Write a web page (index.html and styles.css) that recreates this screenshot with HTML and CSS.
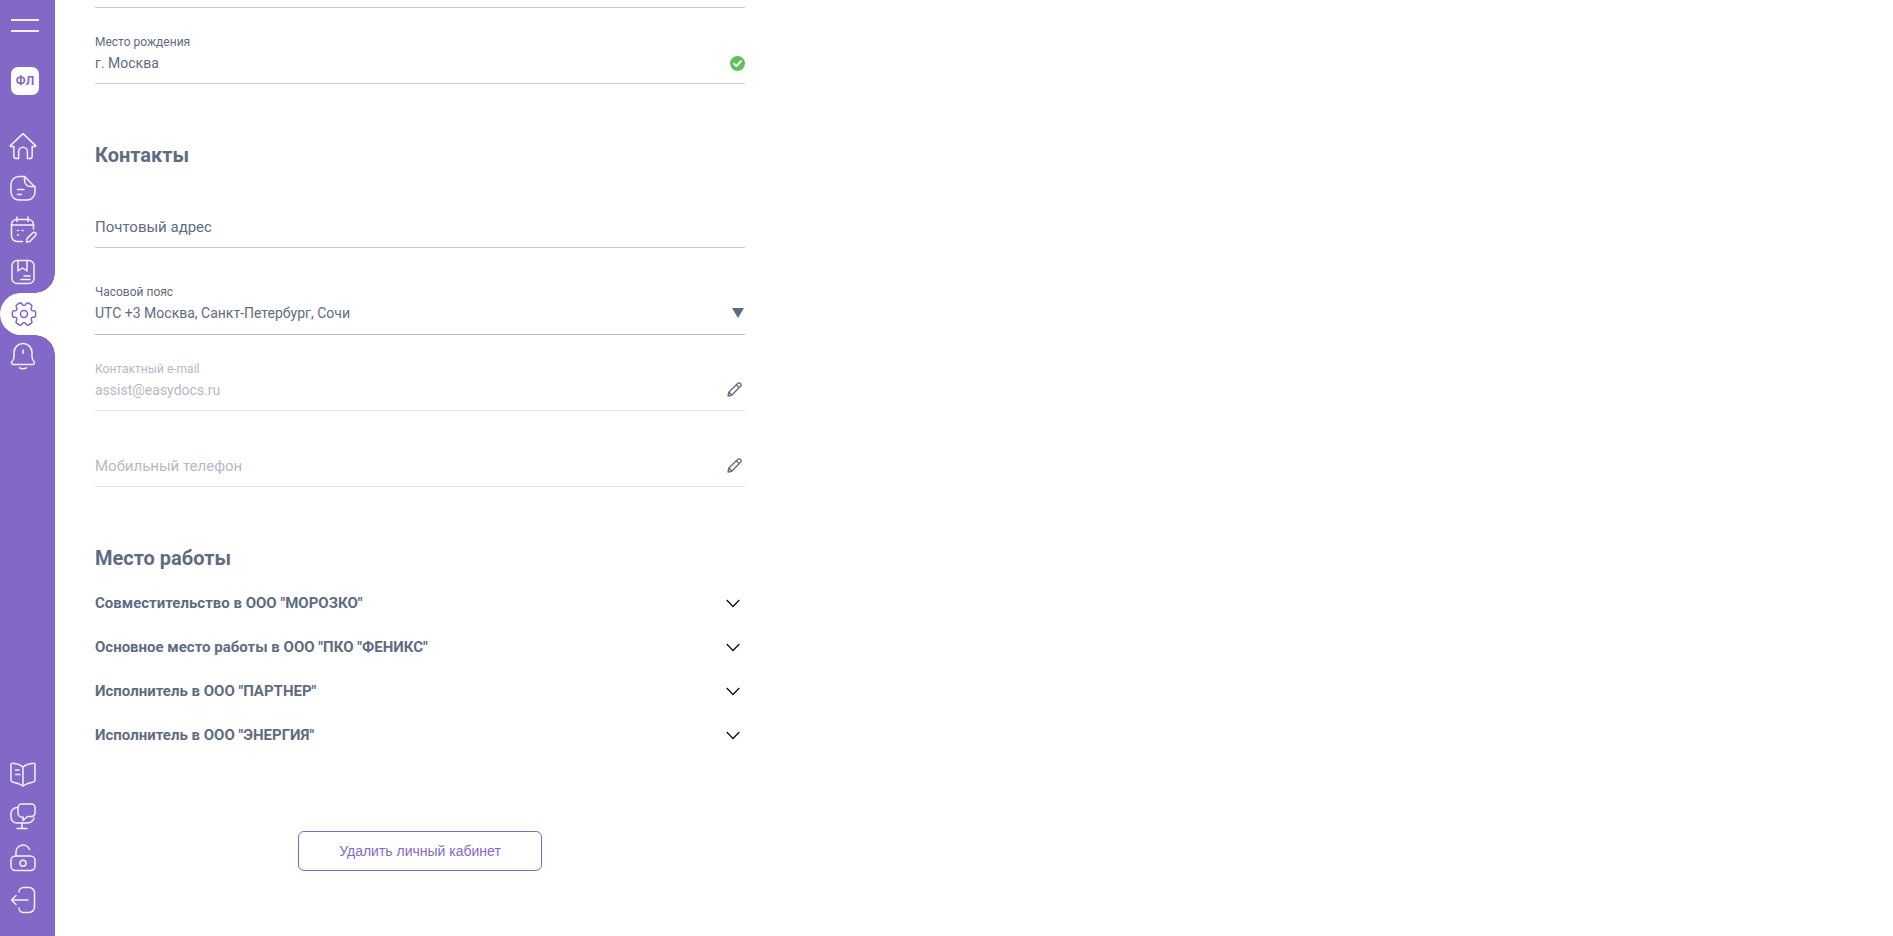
FILE: index.html
```html
<!DOCTYPE html>
<html lang="ru">
<head>
<meta charset="utf-8">
<title>Настройки</title>
<link rel="stylesheet" href="styles.css">
</head>
<body>
<div class="app">
  <aside class="sidebar">
    <div class="nav-top">
      <div class="burger"><span></span><span></span></div>
      <div class="avatar">ФЛ</div>
      <nav class="nav">
        <a class="nav-item"><svg class="ico" viewBox="0 0 28 28"><path d="M14 1.600 26.600 13.600a.6.6 0 0 1-.4 1H23.200V24a2.600 2.600 0 0 1-2.600 2.600H18.400V19.600a4.400 4.400 0 0 0-8.800 0V26.600H7.400A2.600 2.600 0 0 1 4.800 24V14.600H1.800a.6.6 0 0 1-.4-1Z"/></svg></a>
        <a class="nav-item"><svg class="ico" viewBox="0 0 28 28"><path d="M10 2.500H15.500L26 13V18a8 8 0 0 1-8 8H10a8 8 0 0 1-8-8V10.500a8 8 0 0 1 8-8Z"/><path d="M15.500 2.500V6.500a6 6 0 0 0 6 6H26M8.500 15.500H15M8.500 20.500H12.500"/></svg></a>
        <a class="nav-item"><svg class="ico" viewBox="0 0 28 28"><path d="M13.500 25.500H8a5.500 5.500 0 0 1-5.500-5.500V8.500A5 5 0 0 1 7.500 3.500H19.500a5 5 0 0 1 5 5V13"/><path d="M2.500 9H24.500M8 1V5.500M19 1V5.500M8.500 14.500H9.500M13 14.500H14M8.500 19H9.500"/><path d="M17.500 26 18 22.600 23.800 16.800a1.700 1.700 0 0 1 2.700 2.600L20.800 25.400Z"/></svg></a>
        <a class="nav-item"><svg class="ico" viewBox="0 0 28 28"><rect x="3" y="2.500" width="22" height="23" rx="5"/><path d="M9 2.500V13L13.500 10 18 13V2.500M15 18H21M12 21.500H21"/></svg></a>
        <a class="nav-item is-active"><svg class="ico ico-24" viewBox="0 0 24 24"><circle cx="12" cy="12" r="3"/><path d="M2 12.880v-1.760c0-1.040.850-1.900 1.900-1.900 1.810 0 2.550-1.280 1.640-2.850-.520-.900-.210-2.070.700-2.590l1.730-.990c.790-.470 1.810-.190 2.280.600l.110.190c.900 1.570 2.380 1.570 3.290 0l.110-.190c.470-.790 1.490-1.070 2.280-.600l1.730.990c.910.520 1.220 1.690.700 2.590-.910 1.570-.170 2.850 1.640 2.850 1.040 0 1.900.850 1.900 1.900v1.760c0 1.040-.850 1.900-1.900 1.900-1.810 0-2.550 1.280-1.640 2.850.520.910.210 2.070-.700 2.590l-1.730.990c-.790.470-1.810.190-2.280-.600l-.110-.190c-.900-1.570-2.380-1.570-3.290 0l-.110.190c-.470.790-1.490 1.070-2.280.600l-1.730-.990a1.900 1.900 0 0 1-.700-2.590c.910-1.570.170-2.850-1.640-2.850-1.050 0-1.900-.860-1.900-1.900z"/></svg></a>
        <a class="nav-item"><svg class="ico" viewBox="0 0 28 28"><path d="M14 1.500a9 9 0 0 0-9 9V15c0 1.500-.7 3-1.800 4.300-1.200 1.400-.6 3.200 1.300 3.200H23.500c1.900 0 2.500-1.800 1.300-3.200C23.700 18 23 16.500 23 15V10.500a9 9 0 0 0-9-9Z"/><path d="M14 8V11.500M10.500 25.800c1.800 1.200 5.200 1.200 7 0"/></svg></a>
      </nav>
    </div>
    <div class="nav nav-bottom">
      <a class="nav-item"><svg class="ico" viewBox="0 0 28 28"><path d="M14 7C11 4.500 6.500 3.500 3.500 3.300a1.300 1.300 0 0 0-1.500 1.300V20a2 2 0 0 0 1.600 2C7 22.600 11 24 14 26c3-2 7-3.400 10.400-4a2 2 0 0 0 1.600-2V4.600a1.300 1.300 0 0 0-1.500-1.300C21.500 3.500 17 4.500 14 7Z"/><path d="M14 7V26M6.500 10H10M6.500 14.500H11"/></svg></a>
      <a class="nav-item"><svg class="ico" viewBox="0 0 28 28"><path d="M9 5.500H8a6 6 0 0 0-6 6V15a6 6 0 0 0 6 6H18c2.500 0 6-1.500 7-5"/><path d="M13 21V26.500M8 26.500H18"/><path d="M9 5.500A3.500 3.500 0 0 1 12.500 2H22.500A3.500 3.500 0 0 1 26 5.500V11A3.500 3.500 0 0 1 22.500 14.500H18.500L14 18.500V15A4 4 0 0 1 9 11Z"/></svg></a>
      <a class="nav-item"><svg class="ico" viewBox="0 0 28 28"><rect x="2" y="12" width="24" height="14.500" rx="4.500"/><circle cx="14" cy="19.200" r="3"/><path d="M7 12V8a7 7 0 0 1 13.500-2.500"/></svg></a>
      <a class="nav-item"><svg class="ico" viewBox="0 0 28 28"><path d="M10 6V6a4.500 4.500 0 0 1 4.500-4.500H20a5.500 5.500 0 0 1 5.500 5.500V21a5.500 5.500 0 0 1-5.500 5.500H14.500A4.500 4.500 0 0 1 10 22"/><path d="M19 14H2.500M7 9.500 2.500 14 7 18.500"/></svg></a>
    </div>
  </aside>

  <main class="content">
    <div class="field-tail"></div>

    <div class="field">
      <div class="field-label">Место рождения</div>
      <div class="field-value">г. Москва</div>
      <svg class="field-icon check" viewBox="0 0 15 15"><circle cx="7.500" cy="7.500" r="7.500"/><path d="M4 7.800 6.400 10 11 5.300"/></svg>
    </div>

    <h2 class="section-title contacts-title">Контакты</h2>

    <div class="field field-empty postal">
      <div class="field-placeholder">Почтовый адрес</div>
    </div>

    <div class="field field-select">
      <div class="field-label">Часовой пояс</div>
      <div class="field-value">UTC +3 Москва, Санкт-Петербург, Сочи</div>
      <svg class="field-icon caret" viewBox="0 0 12 10"><path d="M0 0H12L6 10Z"/></svg>
    </div>

    <div class="field is-disabled">
      <div class="field-label">Контактный e-mail</div>
      <div class="field-value">assist@easydocs.ru</div>
      <svg class="field-icon pencil" viewBox="0 0 15 15"><path d="M1 14 1.700 10.300 10.600 1.500a1.900 1.900 0 0 1 2.900 2.800L4.700 13.300ZM9.300 2.800 12.200 5.700M2 10.200 4.800 13"/></svg>
    </div>

    <div class="field field-empty is-disabled">
      <div class="field-placeholder">Мобильный телефон</div>
      <svg class="field-icon pencil" viewBox="0 0 15 15"><path d="M1 14 1.700 10.300 10.600 1.500a1.900 1.900 0 0 1 2.900 2.800L4.700 13.300ZM9.300 2.800 12.200 5.700M2 10.200 4.800 13"/></svg>
    </div>

    <h2 class="section-title work-title">Место работы</h2>

    <div class="jobs">
      <div class="job"><span>Совместительство в ООО "МОРОЗКО"</span><svg class="chev" viewBox="0 0 14 9"><path d="M.7 1 7 7.500 13.300 1"/></svg></div>
      <div class="job"><span>Основное место работы в ООО "ПКО "ФЕНИКС"</span><svg class="chev" viewBox="0 0 14 9"><path d="M.7 1 7 7.500 13.300 1"/></svg></div>
      <div class="job"><span>Исполнитель в ООО "ПАРТНЕР"</span><svg class="chev" viewBox="0 0 14 9"><path d="M.7 1 7 7.500 13.300 1"/></svg></div>
      <div class="job"><span>Исполнитель в ООО "ЭНЕРГИЯ"</span><svg class="chev" viewBox="0 0 14 9"><path d="M.7 1 7 7.500 13.300 1"/></svg></div>
    </div>

    <div class="actions">
      <button class="btn-delete" type="button">Удалить личный кабинет</button>
    </div>
  </main>
</div>
</body>
</html>
```
FILE: styles.css
```css
* { box-sizing: border-box; }
html, body { margin: 0; height: 100%; }
body {
  font-family: Roboto, "Liberation Sans", sans-serif;
  background: #fff;
  color: #5f6c80;
  overflow: hidden;
}
.app { display: flex; height: 936px; }

/* Sidebar */
.sidebar {
  width: 55px;
  flex: none;
  background: #8468c8;
  display: flex;
  flex-direction: column;
  justify-content: space-between;
  padding-bottom: 15px;
}
.burger {
  display: flex;
  flex-direction: column;
  gap: 9px;
  padding: 19px 0 0 11px;
}
.burger span { display: block; width: 28px; height: 2px; background: #f1edf9; }
.avatar {
  width: 28px;
  height: 28px;
  margin: 35px 0 0 11px;
  border-radius: 7px;
  background: #fff;
  color: #8468c8;
  font-size: 12px;
  font-weight: 700;
  display: flex;
  align-items: center;
  justify-content: center;
}
.nav { display: flex; flex-direction: column; }
.nav-top .nav { margin-top: 30px; }
.nav-item {
  position: relative;
  height: 42px;
  display: flex;
  align-items: center;
  padding-left: 9px;
}
.ico {
  width: 28px;
  height: 28px;
  fill: none;
  stroke: #f4f0fb;
  stroke-width: 1.500;
  stroke-linecap: round;
  stroke-linejoin: round;
}
.ico-24 { stroke-width: 1.300; }
.is-active {
  background: #fff;
  border-radius: 21px 0 0 21px;
  padding-left: 9.500px;
}
.is-active .ico { stroke: #8468c8; }
.is-active::before,
.is-active::after {
  content: "";
  position: absolute;
  right: 0;
  width: 20px;
  height: 20px;
}
.is-active::before {
  bottom: 100%;
  background: radial-gradient(circle at 0 0, transparent 19.500px, #fff 20px);
}
.is-active::after {
  top: 100%;
  background: radial-gradient(circle at 0 100%, transparent 19.500px, #fff 20px);
}

/* Content */
.content { width: 650px; margin-left: 40px; flex: none; }
.field-tail { height: 8px; border-bottom: 1px solid #c9c9c9; }
.field {
  position: relative;
  height: 76px;
  border-bottom: 1px solid #c9c9c9;
  display: flex;
  flex-direction: column;
  justify-content: flex-end;
  padding-bottom: 10px;
}
.field-label { font-size: 12px; line-height: 16px; color: #5f6c80; margin-bottom: 3px; }
.field-value { font-size: 14px; line-height: 20px; color: #5f6c80; }
.field-placeholder { font-size: 15px; line-height: 20px; color: #5f6c80; }
.field-select { margin-top: 11px; padding-bottom: 11px; border-bottom-color: #b8c0ca; }
.is-disabled { border-bottom-color: #e2e4e7; }
.is-disabled .field-label,
.is-disabled .field-value,
.is-disabled .field-placeholder { color: #b3bac5; }
.field-icon { position: absolute; }
.check { right: 0; bottom: 12px; width: 15px; height: 15px; }
.check circle { fill: #62bf5a; }
.check path { fill: none; stroke: #fff; stroke-width: 2; stroke-linecap: round; stroke-linejoin: round; }
.caret { right: 1px; bottom: 16px; width: 12px; height: 10px; fill: #5f6c80; }
.pencil {
  right: 3px;
  bottom: 13px;
  width: 15px;
  height: 15px;
  fill: none;
  stroke: #5f6c80;
  stroke-width: 1.300;
  stroke-linejoin: round;
}
.section-title { margin: 0; font-size: 20px; font-weight: 700; line-height: 24px; color: #5f6c80; }
.contacts-title { margin-top: 59px; }
.postal { height: 81px; }
.work-title { margin-top: 59px; }

.jobs { margin-top: 11px; display: flex; flex-direction: column; }
.job {
  height: 44px;
  display: flex;
  align-items: center;
  justify-content: space-between;
  padding-right: 5px;
  font-size: 15px;
  font-weight: 700;
}
.chev { width: 14px; height: 9px; margin-top: 1px; fill: none; stroke: #111; stroke-width: 1.300; }
.actions { display: flex; justify-content: center; margin-top: 74px; }
.btn-delete {
  width: 244px;
  height: 40px;
  border: 1px solid #8468c8;
  border-radius: 6px;
  background: #fff;
  color: #8468c8;
  font-family: "Liberation Sans", Arial, sans-serif;
  font-size: 14px;
}
```
